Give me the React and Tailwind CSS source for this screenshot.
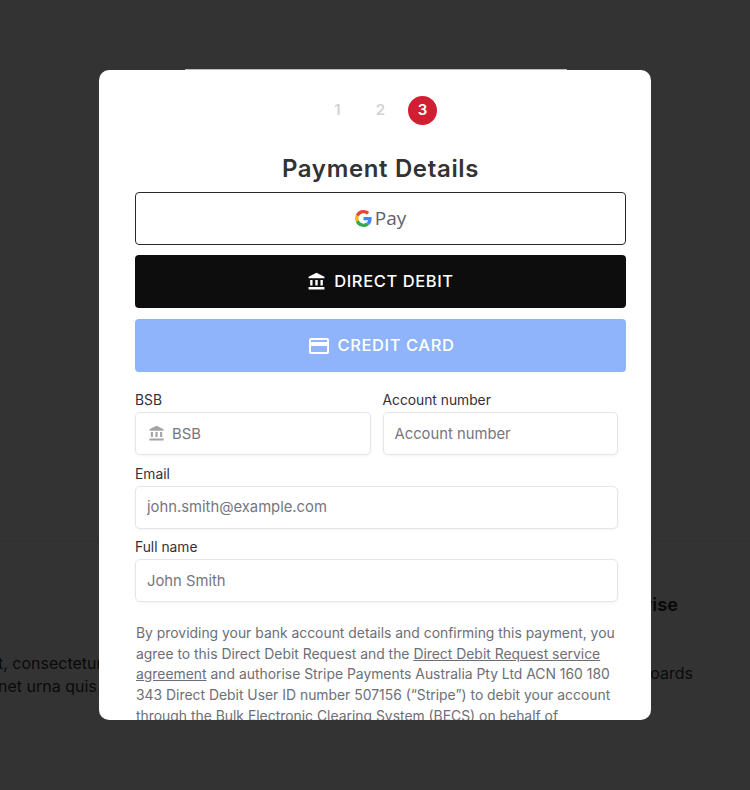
import React from "react";
import { MdAccountBalance, MdOutlineCreditCard } from "react-icons/md";

function GoogleG() {
  return (
    <svg viewBox="0 0 48 48" className="h-[17px] w-[17px]">
      <path fill="#EA4335" d="M24 9.5c3.54 0 6.71 1.22 9.21 3.6l6.85-6.85C35.9 2.38 30.47 0 24 0 14.62 0 6.51 5.38 2.56 13.22l7.98 6.19C12.43 13.72 17.74 9.5 24 9.5z" />
      <path fill="#4285F4" d="M46.98 24.55c0-1.57-.15-3.09-.38-4.55H24v9.02h12.94c-.58 2.96-2.26 5.48-4.78 7.18l7.73 6c4.51-4.18 7.09-10.36 7.09-17.65z" />
      <path fill="#FBBC05" d="M10.53 28.59c-.48-1.45-.76-2.99-.76-4.59s.27-3.14.76-4.59l-7.98-6.19C.92 16.46 0 20.12 0 24c0 3.88.92 7.54 2.56 10.78l7.97-6.19z" />
      <path fill="#34A853" d="M24 48c6.48 0 11.93-2.13 15.89-5.81l-7.73-6c-2.15 1.45-4.92 2.3-8.16 2.3-6.26 0-11.57-4.22-13.47-9.91l-7.98 6.19C6.51 42.62 14.62 48 24 48z" />
    </svg>
  );
}

function Field({ label, placeholder, icon, className = "" }) {
  return (
    <div className={`flex flex-col ${className}`}>
      <label className="mb-[1px] text-[13.8px] leading-[21px] text-[#30313d]">{label}</label>
      <div className="flex h-[43px] items-center rounded-[5px] border border-[#e6e6e6] bg-white px-[11px] shadow-[0_1px_3px_rgba(0,0,0,0.05)]">
        {icon}
        <input
          placeholder={placeholder}
          className="w-full bg-transparent pt-[1px] text-[14.8px] text-[#30313d] outline-none placeholder:text-[#757680]"
        />
      </div>
    </div>
  );
}

export default function App() {
  return (
    <div className="relative h-[790px] w-[750px] overflow-hidden bg-white font-['Inter',sans-serif]">
      {/* page behind the modal */}
      <div className="flex h-full flex-col pt-[541px]">
        <div className="w-full border-t border-[#f0f0f0]" />
        <div className="flex w-full justify-between">
          <div className="-ml-[2px] pt-[110px] text-[16px] leading-[23px] text-[#333]">
            <p>t, consectetur</p>
            <p>net urna quis</p>
          </div>
          <div className="mr-[57px] flex flex-col items-end pt-[51px] text-[#333]">
            <p className="mr-[15px] text-[18px] font-bold leading-[24px]">Enterprise</p>
            <p className="mt-[44px] text-[16px] leading-[24px]">Dashboards</p>
          </div>
        </div>
      </div>

      {/* overlay */}
      <div className="absolute inset-0 flex items-start justify-center bg-black/80 pt-[70px]">
        <div className="relative">
          <div className="absolute -top-[1px] left-[86px] h-[1px] w-[382px] bg-[#bdbdbd]" />
          <div className="h-[650px] w-[552px] overflow-hidden rounded-[10px] bg-white pl-[36px] pr-[25px] pt-[26px]">
            <div className="flex items-center justify-center gap-[13px] text-[15px] font-semibold text-[#d2d2d4]">
              <span className="flex h-[29px] w-[29px] items-center justify-center pr-[2px]">1</span>
              <span className="flex h-[29px] w-[29px] items-center justify-center">2</span>
              <span className="flex h-[29px] w-[29px] items-center justify-center rounded-full bg-[#d01f32] text-white">3</span>
            </div>

            <h2 className="mt-[29px] text-center text-[24px] font-semibold leading-[30px] tracking-[0.65px] text-[#333]">
              Payment Details
            </h2>

            <div className="mt-[8px] flex flex-col gap-[10px]">
              <button className="flex h-[53px] items-center justify-center gap-[3px] rounded-[4px] border border-[#2a2a2a] bg-white">
                <GoogleG />
                <span className="font-['Open_Sans',sans-serif] text-[19px] leading-none text-[#5f6368]">Pay</span>
              </button>
              <button className="flex h-[53px] items-center justify-center gap-[8px] rounded-[4px] bg-[#0d0d0d] text-[16.5px] font-medium tracking-[0.6px] text-white">
                <MdAccountBalance className="h-[19px] w-[19px]" />
                DIRECT DEBIT
              </button>
              <button className="mt-[1px] flex h-[53px] items-center justify-center gap-[7px] rounded-[4px] bg-[#8fb4fb] text-[16.5px] font-medium tracking-[0.6px] text-white">
                <MdOutlineCreditCard className="h-[24px] w-[24px]" />
                CREDIT CARD
              </button>
            </div>

            <div className="mr-[8px] mt-[18px] flex flex-col gap-[8.5px]">
              <div className="flex gap-[12px]">
                <Field
                  label="BSB"
                  placeholder="BSB"
                  className="flex-1"
                  icon={<MdAccountBalance className="ml-[1px] mr-[7px] h-[17px] w-[17px] shrink-0 text-[#a3a3a8]" />}
                />
                <Field label="Account number" placeholder="Account number" className="flex-1" />
              </div>
              <Field label="Email" placeholder="john.smith@example.com" />
              <Field label="Full name" placeholder="John Smith" />
            </div>

            <p className="mr-[8px] ml-[1px] mt-[21px] text-[13.9px] leading-[20.7px] text-[#6d6e78]">
              By providing your bank account details and confirming this payment, you agree to this Direct Debit Request and the{" "}
              <a className="underline">Direct Debit Request service agreement</a>{" "}
              and authorise Stripe Payments Australia Pty Ltd ACN 160 180 343 Direct Debit User ID number 507156 (“Stripe”) to debit your account through the Bulk Electronic Clearing System (BECS) on behalf of
            </p>
          </div>
        </div>
      </div>
    </div>
  );
}
